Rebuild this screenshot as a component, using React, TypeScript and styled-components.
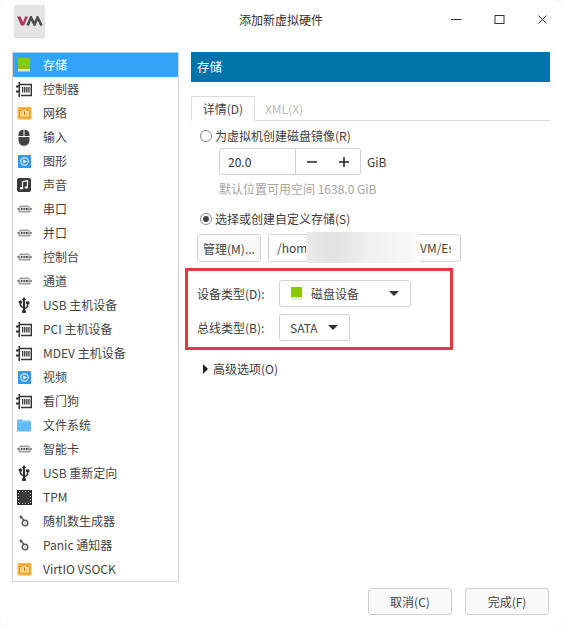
import React from "react";
import styled, { createGlobalStyle } from "styled-components";

const GlobalStyle = createGlobalStyle`
  html, body {
    margin: 0;
    background: #fbfbfb;
  }
  * {
    box-sizing: border-box;
  }
`;

const Window = styled.div`
  width: 562px;
  height: 628px;
  background: #fff;
  border-radius: 10px;
  font-family: "Noto Sans CJK SC", "Noto Sans", sans-serif;
  font-size: 12px;
  color: #3c3c3c;
  display: flex;
  flex-direction: column;
  overflow: hidden;
`;

const TitleBar = styled.header`
  height: 52px;
  flex: none;
  position: relative;
  display: flex;
  align-items: flex-start;
  padding: 5px 0 0 14px;
`;

const Logo = styled.div`
  width: 31px;
  height: 32px;
  border-radius: 2px;
  background: #e4e4e4;
  box-shadow: 0 1px 1px #d2d2d2;
  display: flex;
  align-items: center;
  justify-content: center;
`;

const Title = styled.div`
  position: absolute;
  left: 0;
  right: 0;
  top: 11px;
  text-align: center;
  line-height: 18px;
  color: #333;
`;

const WinControls = styled.div`
  position: absolute;
  top: 14px;
  right: 14px;
  display: flex;
  gap: 32px;
`;

const Body = styled.div`
  display: flex;
  gap: 12px;
  padding: 0 12px;
  height: 530px;
  flex: none;
`;

const Sidebar = styled.ul`
  list-style: none;
  margin: 0;
  padding: 0;
  width: 167px;
  height: 530px;
  border: 1px solid #d4d4d4;
  border-top-color: #a9d5f5;
  flex: none;
`;

const SideRow = styled.li<{ $active?: boolean }>`
  height: 24px;
  display: flex;
  align-items: center;
  gap: 10px;
  padding-left: 2px;
  line-height: 24px;
  white-space: nowrap;
  background: ${(p) => (p.$active ? "#33a4f8" : "transparent")};
  color: ${(p) => (p.$active ? "#fff" : "#444")};
`;

const IconSlot = styled.span`
  width: 18px;
  height: 18px;
  flex: none;
  display: flex;
  align-items: center;
  justify-content: center;
`;

const Main = styled.main`
  width: 359px;
  flex: none;
  display: flex;
  flex-direction: column;
`;

const Banner = styled.div`
  height: 30px;
  background: #0073a9;
  color: #fff;
  padding-left: 6px;
  line-height: 30px;
  font-size: 12.5px;
`;

const Tabs = styled.div`
  margin-top: 14px;
  height: 25px;
  display: flex;
  border-bottom: 1px solid #dcdcdc;
`;

const Tab = styled.div<{ $active?: boolean }>`
  width: ${(p) => (p.$active ? "64px" : "58px")};
  height: 25px;
  display: flex;
  align-items: center;
  justify-content: center;
  border: ${(p) => (p.$active ? "1px solid #dcdcdc" : "none")};
  border-bottom: ${(p) => (p.$active ? "1px solid #fff" : "none")};
  border-radius: 2px 2px 0 0;
  color: ${(p) => (p.$active ? "#444" : "#bcbcbc")};
`;

const Form = styled.div`
  padding-left: 6px;
  display: flex;
  flex-direction: column;
`;

const RadioRow = styled.label<{ $top: number }>`
  margin-top: ${(p) => p.$top}px;
  height: 18px;
  display: flex;
  align-items: center;
  gap: 3px;
  padding-left: 3px;
  line-height: 18px;
  color: #3c3c3c;
`;

const Radio = styled.span<{ $checked?: boolean }>`
  width: 12px;
  height: 12px;
  border-radius: 50%;
  border: 1px solid #8a8a8a;
  background: #fff;
  display: flex;
  align-items: center;
  justify-content: center;
  &::after {
    content: "";
    display: ${(p) => (p.$checked ? "block" : "none")};
    width: 6px;
    height: 6px;
    border-radius: 50%;
    background: #444;
  }
`;

const SpinRow = styled.div`
  margin: 3px 0 0 22px;
  display: flex;
  align-items: center;
  gap: 6px;
`;

const Spin = styled.div`
  width: 142px;
  height: 27px;
  border: 1px solid #d2d2d2;
  border-radius: 3px;
  display: flex;
  align-items: center;
`;

const SpinValue = styled.div`
  width: 76px;
  height: 100%;
  padding-left: 8px;
  line-height: 25px;
  border-right: 1px solid #d2d2d2;
  color: #333;
`;

const SpinButton = styled.div`
  width: 32px;
  height: 100%;
  display: flex;
  align-items: center;
  justify-content: center;
`;

const Hint = styled.div`
  margin: 5px 0 0 22px;
  height: 18px;
  line-height: 18px;
  color: #a6a6a6;
`;

const PathRow = styled.div`
  margin-top: 6px;
  display: flex;
  gap: 7px;
  height: 28px;
`;

const PlainButton = styled.div`
  width: 64px;
  height: 28px;
  border: 1px solid #d2d2d2;
  border-radius: 3px;
  background: #f9f9f9;
  display: flex;
  align-items: center;
  justify-content: center;
  white-space: nowrap;
  color: #444;
`;

const PathInput = styled.div`
  position: relative;
  width: 193px;
  height: 28px;
  border: 1px solid #d2d2d2;
  border-radius: 3px;
  padding-left: 8px;
  line-height: 26px;
  white-space: nowrap;
  color: #444;
`;

const PathTail = styled.span`
  position: absolute;
  right: 9px;
  top: 0;
  width: 31px;
  overflow: hidden;
`;

const Redacted = styled.div`
  position: absolute;
  left: 37px;
  top: -3px;
  width: 113px;
  height: 31px;
  background: linear-gradient(90deg, #ececec 0%, #e2e2e2 22%, #f0f0f0 55%, #fafafa 100%);
`;

const HighlightBox = styled.section`
  margin: 6px 0 0 -12px;
  width: 268px;
  height: 82px;
  border: 3px solid #e23a42;
  padding: 9px 9px 0 9px;
  display: flex;
  flex-direction: column;
  gap: 7px;
`;

const FieldRow = styled.div`
  display: flex;
  align-items: center;
  height: 27px;
`;

const FieldLabel = styled.div`
  width: 82px;
  flex: none;
  white-space: nowrap;
  color: #3c3c3c;
`;

const Select = styled.div<{ $width: number }>`
  width: ${(p) => p.$width}px;
  height: 27px;
  border: 1px solid #d2d2d2;
  border-radius: 3px;
  display: flex;
  align-items: center;
  gap: 8px;
  padding: 0 11px 0 10px;
  color: #444;
`;

const SelectText = styled.span`
  flex: 1;
  white-space: nowrap;
`;

const Caret = styled.span`
  width: 0;
  height: 0;
  border-left: 5px solid transparent;
  border-right: 5px solid transparent;
  border-top: 5px solid #333;
`;

const Expander = styled.div`
  margin: 10px 0 0 6px;
  height: 18px;
  display: flex;
  align-items: center;
  gap: 5px;
  line-height: 18px;
  color: #3c3c3c;
`;

const ExpanderArrow = styled.span`
  width: 0;
  height: 0;
  border-top: 5px solid transparent;
  border-bottom: 5px solid transparent;
  border-left: 5px solid #222;
`;

const Footer = styled.footer`
  flex: none;
  height: 46px;
  padding: 6px 13px 0 0;
  display: flex;
  justify-content: flex-end;
  gap: 13px;
`;

const FooterButton = styled.div`
  width: 84px;
  height: 27px;
  border: 1px solid #cfcfcf;
  border-radius: 3px;
  background: #fafafa;
  display: flex;
  align-items: center;
  justify-content: center;
  color: #444;
`;

const DiskIcon = ({ size = 14 }: { size?: number }) => (
  <svg width={size} height={size} viewBox="0 0 14 14">
    <rect x="1" y="0" width="12" height="11" fill="#8cc800" />
    <rect x="1" y="11" width="12" height="2.5" fill="#dfe8c8" />
  </svg>
);

const CardIcon = () => (
  <svg width="16" height="15" viewBox="0 0 16 15">
    <path d="M4 2.500h11.300v11H5" fill="none" stroke="#333" strokeWidth="1.400" />
    <path d="M2.500 0H4v15H2.500zM0 3.500h2.500v2H0zM0 8.500h2.500v2H0z" fill="#333" />
    <path d="M6 5h1.300v5.500H6zM8.100 5h1.300v5.500H8.100zM10.200 5h1.300v5.500h-1.300zM12.300 5h1.300v5.500h-1.300z" fill="#333" />
  </svg>
);

const NetIcon = () => (
  <svg width="15" height="14" viewBox="0 0 15 14">
    <rect x="0.500" y="1" width="14" height="12.500" rx="1.500" fill="#f9b23e" />
    <path d="M2.500 11V4.500h2.800V3h4.400v1.500h2.800V11z" fill="#fcd68a" stroke="#e09518" strokeWidth="0.800" />
    <rect x="7" y="5.500" width="1.200" height="3.500" fill="#c97f10" />
  </svg>
);

const MouseIcon = () => (
  <svg width="12" height="17" viewBox="0 0 12 17">
    <path d="M5.500 0.500C2.500 0.700 0.500 2.600 0.500 5.500V7h5zM6.500 0.500C9.500 0.700 11.500 2.600 11.500 5.500V7h-5zM0.500 8h11v3.500C11.500 14.600 9 16.800 6 16.800S0.500 14.600 0.500 11.500z" fill="#444" />
  </svg>
);

const DisplayIcon = () => (
  <svg width="13" height="13" viewBox="0 0 13 13">
    <rect width="13" height="13" fill="#2f9bee" />
    <circle cx="6.500" cy="6.500" r="4.200" fill="#fff" />
    <circle cx="6.500" cy="6.500" r="3.200" fill="#2f9bee" />
    <path d="M5.200 4.400 8.800 6.500 5.200 8.600z" fill="#fff" />
  </svg>
);

const SoundIcon = () => (
  <svg width="14" height="14" viewBox="0 0 14 14">
    <rect width="14" height="14" rx="2" fill="#3a3a3a" />
    <path d="M5.500 3.500 10.500 2.800V9.200" fill="none" stroke="#fff" strokeWidth="1.200" />
    <path d="M5.500 3.500V10" fill="none" stroke="#fff" strokeWidth="1.200" />
    <ellipse cx="4.500" cy="10.200" rx="1.600" ry="1.200" fill="#fff" />
    <ellipse cx="9.400" cy="9.400" rx="1.600" ry="1.200" fill="#fff" />
  </svg>
);

const SerialIcon = () => (
  <svg width="15" height="8" viewBox="0 0 15 8">
    <rect x="0" y="2.800" width="15" height="2.400" rx="1.200" fill="#8c8c8c" />
    <path d="M2.500 0.500h10L13.500 7.500h-12z" fill="#a0a0a0" />
    <path d="M3 2.200h9v3.600H3z" fill="#f6f6f6" />
    <path d="M3.800 3.100h1v1.800h-1zM5.500 3.100h1v1.800h-1zM7.200 3.100h1v1.800h-1zM8.900 3.100h1v1.800h-1zM10.400 3.100h1v1.800h-1z" fill="#333" />
  </svg>
);

const UsbIcon = () => (
  <svg width="14" height="16" viewBox="0 0 14 16">
    <path d="M7 0 9.400 3H8V10.800C8 11 9.800 10 9.800 8.600V6.900H9V4.600h3.400v2.300h-1v1.900C11.400 11 8 12 8 12.600V13a2 2 0 1 1-2 0V11.300C5.900 10.700 2.600 10 2.600 7.700V6.600a1.700 1.700 0 1 1 1.600 0V7.600C4.200 9 6 9.700 6 9.900V3H4.600z" fill="#2e2e2e" />
  </svg>
);

const FolderIcon = () => (
  <svg width="14" height="13" viewBox="0 0 14 13">
    <path d="M0 1.500C0 .8.500.5 1 .5h4l1.200 1H13c.6 0 1 .4 1 1V11c0 1-.6 1.500-1.500 1.500h-11C.6 12.500 0 12 0 11z" fill="#62bcf8" />
    <path d="M0 2.200h14V3.200H0z" fill="#8fd0fb" />
  </svg>
);

const TpmIcon = () => (
  <svg width="15" height="15" viewBox="0 0 15 15">
    <rect width="15" height="15" fill="#2c2c2c" />
    <rect x="2" y="2" width="11" height="11" fill="#3c3c3c" />
    <path d="M2 1h1v1H2zM5 1h1v1H5zM8 1h1v1H8zM11 1h1v1h-1zM13 3h1v1h-1zM13 6h1v1h-1zM13 9h1v1h-1zM13 12h1v1h-1zM2 13h1v1H2zM5 13h1v1H5zM8 13h1v1H8zM11 13h1v1h-1zM1 3h1v1H1zM1 6h1v1H1zM1 9h1v1H1zM1 12h1v1H1z" fill="#cfcfcf" />
  </svg>
);

const RngIcon = () => (
  <svg width="10" height="12" viewBox="0 0 10 12">
    <circle cx="2" cy="2" r="1.500" fill="#555" />
    <path d="M3 3 5 5.500" stroke="#555" strokeWidth="1.300" />
    <circle cx="6" cy="8" r="2.800" fill="none" stroke="#555" strokeWidth="1.400" />
    <circle cx="6" cy="8" r="1" fill="#bbb" />
  </svg>
);

type Item = { label: string; icon: React.ReactNode; active?: boolean };

const items: Item[] = [
  { label: "存储", icon: <DiskIcon />, active: true },
  { label: "控制器", icon: <CardIcon /> },
  { label: "网络", icon: <NetIcon /> },
  { label: "输入", icon: <MouseIcon /> },
  { label: "图形", icon: <DisplayIcon /> },
  { label: "声音", icon: <SoundIcon /> },
  { label: "串口", icon: <SerialIcon /> },
  { label: "并口", icon: <SerialIcon /> },
  { label: "控制台", icon: <SerialIcon /> },
  { label: "通道", icon: <SerialIcon /> },
  { label: "USB 主机设备", icon: <UsbIcon /> },
  { label: "PCI 主机设备", icon: <CardIcon /> },
  { label: "MDEV 主机设备", icon: <CardIcon /> },
  { label: "视频", icon: <DisplayIcon /> },
  { label: "看门狗", icon: <CardIcon /> },
  { label: "文件系统", icon: <FolderIcon /> },
  { label: "智能卡", icon: <SerialIcon /> },
  { label: "USB 重新定向", icon: <UsbIcon /> },
  { label: "TPM", icon: <TpmIcon /> },
  { label: "随机数生成器", icon: <RngIcon /> },
  { label: "Panic 通知器", icon: <RngIcon /> },
  { label: "VirtIO VSOCK", icon: <NetIcon /> },
];

export default function App() {
  return (
    <Window>
      <GlobalStyle />
      <TitleBar>
        <Logo>
          <svg width="26" height="10" viewBox="0 0 26 10">
            <path d="M0 .5h3.500L6 6 8.200.5h2.800L7 9.500H4z" fill="#a63a5e" />
            <path d="M10.500 9.500 14 1.500 17.500 8.500 20.500 1.500 24.500 9.500" fill="none" stroke="#4e4e4e" strokeWidth="2.600" />
          </svg>
        </Logo>
        <Title>添加新虚拟硬件</Title>
        <WinControls>
          <svg width="11" height="11" viewBox="0 0 11 11">
            <path d="M0 5.500h10.500" stroke="#333" strokeWidth="1" />
          </svg>
          <svg width="11" height="11" viewBox="0 0 11 11">
            <rect x="1" y="1.500" width="9" height="8" fill="none" stroke="#333" strokeWidth="1" />
          </svg>
          <svg width="11" height="11" viewBox="0 0 11 11">
            <path d="M1.500 1.500l8 8M9.500 1.500l-8 8" stroke="#333" strokeWidth="1" />
          </svg>
        </WinControls>
      </TitleBar>

      <Body>
        <Sidebar>
          {items.map((item) => (
            <SideRow key={item.label} $active={item.active}>
              <IconSlot>{item.icon}</IconSlot>
              {item.label}
            </SideRow>
          ))}
        </Sidebar>

        <Main>
          <Banner>存储</Banner>
          <Tabs>
            <Tab $active>详情(D)</Tab>
            <Tab>XML(X)</Tab>
          </Tabs>
          <Form>
            <RadioRow $top={6}>
              <Radio />
              为虚拟机创建磁盘镜像(R)
            </RadioRow>
            <SpinRow>
              <Spin>
                <SpinValue>20.0</SpinValue>
                <SpinButton>
                  <svg width="10" height="10" viewBox="0 0 10 10">
                    <path d="M0 5h10" stroke="#222" strokeWidth="1.500" />
                  </svg>
                </SpinButton>
                <SpinButton>
                  <svg width="10" height="10" viewBox="0 0 10 10">
                    <path d="M0 5h10M5 0v10" stroke="#222" strokeWidth="1.500" />
                  </svg>
                </SpinButton>
              </Spin>
              GiB
            </SpinRow>
            <Hint>默认位置可用空间 1638.0 GiB</Hint>
            <RadioRow $top={12}>
              <Radio $checked />
              选择或创建自定义存储(S)
            </RadioRow>
            <PathRow>
              <PlainButton>管理(M)...</PlainButton>
              <PathInput>
                /home
                <PathTail>VM/Es</PathTail>
                <Redacted />
              </PathInput>
            </PathRow>
            <HighlightBox>
              <FieldRow>
                <FieldLabel>设备类型(D):</FieldLabel>
                <Select $width={132}>
                  <DiskIcon size={13} />
                  <SelectText>磁盘设备</SelectText>
                  <Caret />
                </Select>
              </FieldRow>
              <FieldRow>
                <FieldLabel>总线类型(B):</FieldLabel>
                <Select $width={71}>
                  <SelectText>SATA</SelectText>
                  <Caret />
                </Select>
              </FieldRow>
            </HighlightBox>
            <Expander>
              <ExpanderArrow />
              高级选项(O)
            </Expander>
          </Form>
        </Main>
      </Body>

      <Footer>
        <FooterButton>取消(C)</FooterButton>
        <FooterButton>完成(F)</FooterButton>
      </Footer>
    </Window>
  );
}
